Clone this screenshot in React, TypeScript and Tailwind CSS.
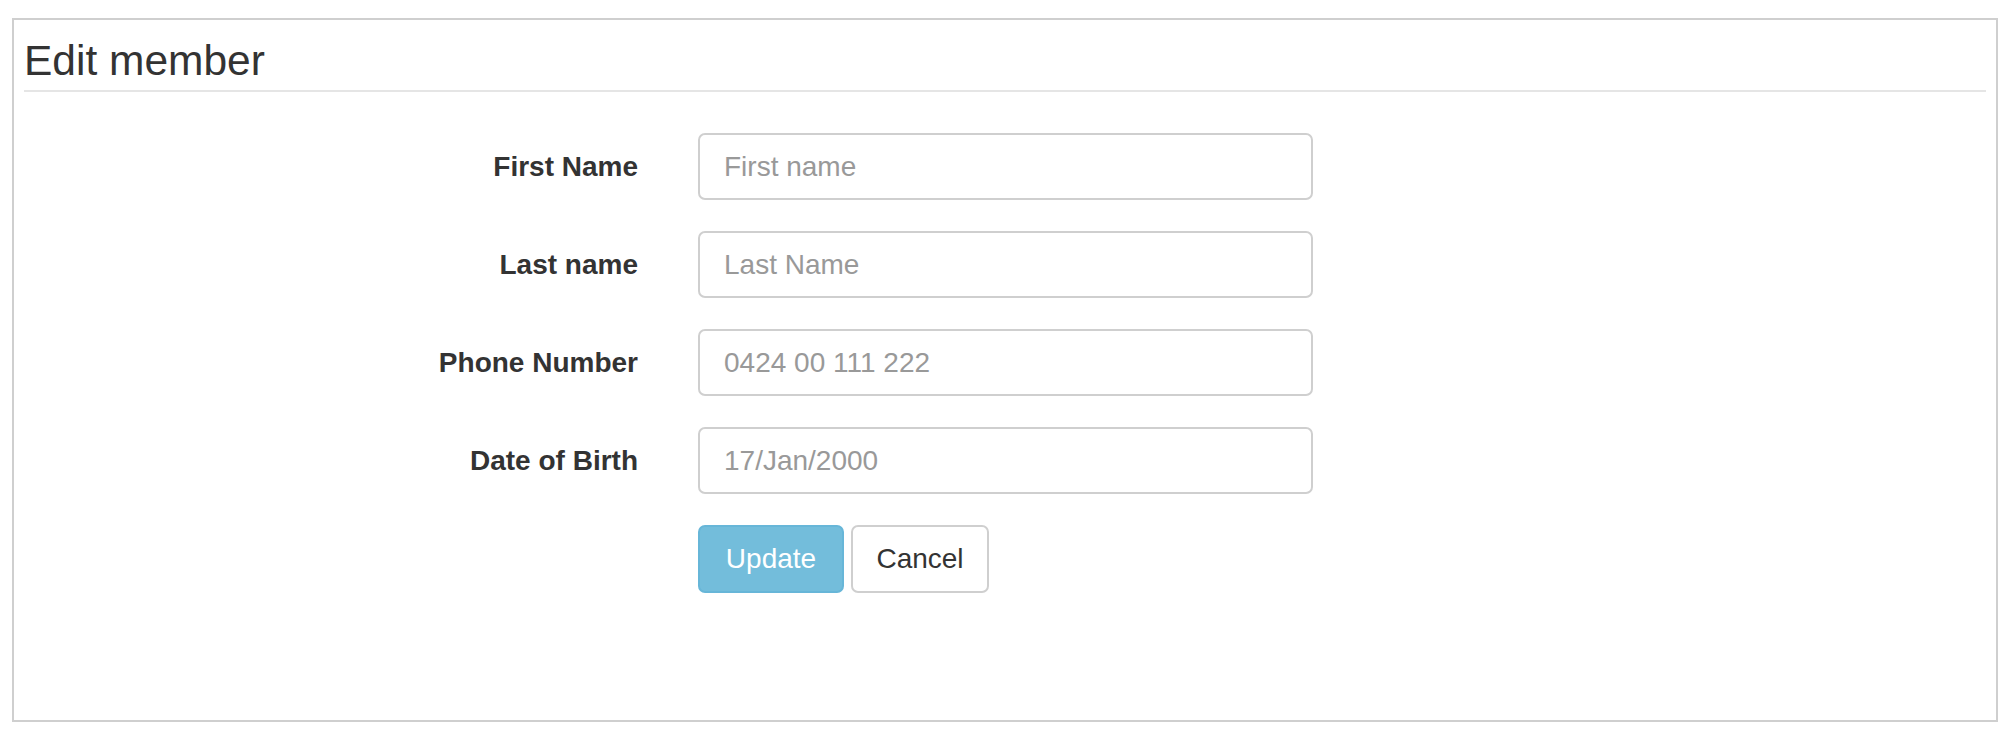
import { useState } from "react";

const fields = [
    { id: "firstName", label: "First Name", placeholder: "First name" },
    { id: "lastName", label: "Last name", placeholder: "Last Name" },
    { id: "phone", label: "Phone Number", placeholder: "0424 00 111 222" },
    { id: "dob", label: "Date of Birth", placeholder: "17/Jan/2000" },
];

export default function App() {
    const [values, setValues] = useState<Record<string, string>>({});

    return (
        <div className="min-h-screen bg-white font-['Liberation_Sans',Arial,sans-serif] text-[#333333]">
            <div className="ml-[12px] mt-[18px] w-[1986px] h-[704px] border-2 border-[#cfcfcf] px-[10px]">
                <h3 className="pt-[18px] pb-[7px] text-[42.5px] leading-[45px] font-normal border-b-2 border-[#e5e5e5]">
                    Edit member
                </h3>

                <form
                    className="mt-[41px] flex flex-col gap-[31px]"
                    onSubmit={(e) => e.preventDefault()}
                >
                    {fields.map((f) => (
                        <div key={f.id} className="flex items-center">
                            <label
                                htmlFor={f.id}
                                className="w-[614px] text-right text-[28px] font-bold leading-none"
                            >
                                {f.label}
                            </label>
                            <input
                                id={f.id}
                                type="text"
                                value={values[f.id] ?? ""}
                                onChange={(e) => setValues({ ...values, [f.id]: e.target.value })}
                                placeholder={f.placeholder}
                                className="ml-[60px] w-[615px] h-[67px] px-[24px] border-2 border-[#cfcfcf] rounded-[7px] text-[28px] text-[#555555] placeholder:text-[#999999] focus:outline-none"
                            />
                        </div>
                    ))}

                    <div className="flex ml-[674px] gap-[7px]">
                        <button
                            type="submit"
                            disabled
                            className="w-[146px] h-[68px] rounded-[7px] border-2 border-[#67b6d8] bg-[#73bddb] text-white text-[28px]"
                        >
                            Update
                        </button>
                        <button
                            type="button"
                            className="w-[138px] h-[68px] rounded-[7px] border-2 border-[#cfcfcf] bg-white text-[#333333] text-[28px]"
                        >
                            Cancel
                        </button>
                    </div>
                </form>
            </div>
        </div>
    );
}
